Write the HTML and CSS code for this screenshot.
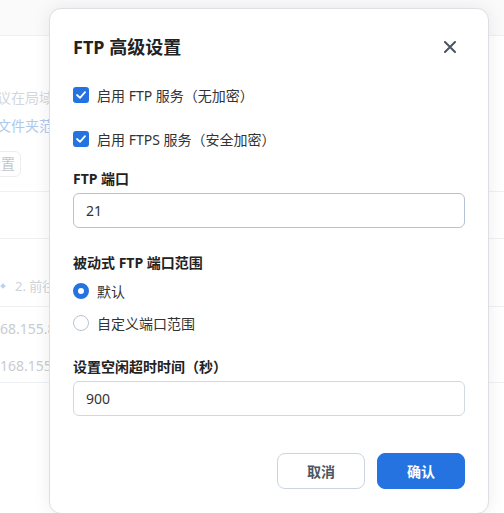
FILE: index.html
```html
<!DOCTYPE html>
<html lang="zh-CN">
<head>
  <meta charset="UTF-8">
  <meta name="viewport" content="width=device-width, initial-scale=1.0">
  <title>FTP 高级设置</title>
  <link rel="stylesheet" href="styles.css">
</head>
<body>
  <div class="page">
    <div class="page-header"></div>
    <div class="page-section intro">
      <p class="intro-text">议在局域网内共享文件</p>
      <p class="intro-link">文件夹范围</p>
      <span class="ghost-btn">设置</span>
    </div>
    <div class="page-section spacer"></div>
    <div class="page-section steps">
      <p class="step"><span class="step-dot"></span>2. 前往</p>
    </div>
    <div class="page-section hosts">
      <p class="host host-first">168.155.8</p>
      <p class="host">168.155.</p>
    </div>
  </div>

  <div class="modal">
    <div class="modal-head">
      <h2>FTP 高级设置</h2>
      <svg class="close" width="12" height="12" viewBox="0 0 12 12">
        <path d="M1 1 L11 11 M11 1 L1 11" stroke="#4b5563" stroke-width="2" stroke-linecap="round"/>
      </svg>
    </div>

    <label class="check first">
      <span class="box"><svg width="10" height="8" viewBox="0 0 10 8"><path d="M1 4 L4 6.8 L9 1.2" fill="none" stroke="#fff" stroke-width="1.8" stroke-linecap="round" stroke-linejoin="round"/></svg></span>
      <span>启用 FTP 服务（无加密）</span>
    </label>
    <label class="check">
      <span class="box"><svg width="10" height="8" viewBox="0 0 10 8"><path d="M1 4 L4 6.8 L9 1.2" fill="none" stroke="#fff" stroke-width="1.8" stroke-linecap="round" stroke-linejoin="round"/></svg></span>
      <span>启用 FTPS 服务（安全加密）</span>
    </label>

    <div class="field-label port-label">FTP 端口</div>
    <input class="field focus" type="text" value="21">

    <div class="field-label passive-label">被动式 FTP 端口范围</div>
    <label class="radio"><span class="dot on"></span>默认</label>
    <label class="radio second"><span class="dot"></span>自定义端口范围</label>

    <div class="field-label idle-label">设置空闲超时时间（秒）</div>
    <input class="field" type="text" value="900">

    <div class="actions">
      <button class="btn cancel">取消</button>
      <button class="btn confirm">确认</button>
    </div>
  </div>
</body>
</html>
```

FILE: styles.css
```css
html, body {
  margin: 0;
  height: 100%;
  overflow: hidden;
}
body {
  font-family: "Noto Sans", "Noto Sans CJK SC", sans-serif;
  font-size: 14px;
  background: #fff;
  color: #333;
}
p {
  margin: 0;
}

/* faded page behind the dialog */
.page-header {
  height: 35px;
  background: #fafafb;
  border-bottom: 1px solid #eef0f4;
}
.page-section {
  border-bottom: 1px solid #eef0f4;
}
.intro {
  height: 156px;
  padding-top: 52px;
  box-sizing: border-box;
}
.intro-text {
  margin-left: -3px;
  line-height: 20px;
  color: #d3d7dd;
}
.intro-link {
  margin-left: -3px;
  margin-top: 8px;
  line-height: 20px;
  color: #adc9ee;
}
.ghost-btn {
  display: inline-block;
  margin-left: -20px;
  margin-top: 15px;
  padding: 0 5px 0 6px;
  line-height: 24px;
  border: 1px solid #eceef1;
  border-radius: 6px;
  color: #c3c6cb;
}
.spacer {
  height: 46px;
}
.steps {
  height: 68px;
  padding-top: 37px;
  box-sizing: border-box;
}
.step {
  line-height: 20px;
  padding-left: 15px;
  position: relative;
  color: #cfd2d6;
  font-size: 13px;
}
.step-dot {
  position: absolute;
  left: 1px;
  top: 8px;
  width: 4px;
  height: 4px;
  background: #b9d3f3;
  transform: rotate(45deg);
}
.hosts {
  height: 76px;
  padding-top: 12px;
  box-sizing: border-box;
}
.host {
  line-height: 20px;
  color: #c9ccd0;
}
.host-first {
  margin-left: -8px;
  margin-bottom: 17px;
}

/* dialog */
.modal {
  position: absolute;
  left: 49px;
  top: 8px;
  width: 440px;
  height: 506px;
  box-sizing: border-box;
  padding: 26px 23px 0 23px;
  background: #fff;
  border: 1px solid #dcdfe4;
  border-radius: 12px;
  box-shadow: 0 0 18px rgba(0, 0, 0, 0.08);
}
.modal-head {
  display: flex;
  align-items: center;
  justify-content: space-between;
  height: 24px;
}
.modal-head h2 {
  margin: 0;
  font-size: 18px;
  font-weight: 700;
  color: #222;
  line-height: 24px;
}
.close {
  margin-right: 9px;
}
.check {
  display: flex;
  align-items: center;
  gap: 8px;
  height: 20px;
  margin-top: 24px;
  color: #333;
}
.check.first {
  margin-top: 26px;
}
.box {
  width: 16px;
  height: 16px;
  border-radius: 3px;
  background: #2473e0;
  display: flex;
  align-items: center;
  justify-content: center;
}
.field-label {
  line-height: 20px;
  font-weight: 700;
  color: #222;
  margin-bottom: 4px;
}
.port-label {
  margin-top: 20px;
}
.passive-label {
  margin-top: 25px;
  margin-bottom: 8px;
}
.idle-label {
  margin-top: 24px;
}
.field {
  display: block;
  width: 100%;
  height: 35px;
  box-sizing: border-box;
  padding: 0 12px;
  border: 1px solid #cfd8e3;
  border-radius: 6px;
  font-family: inherit;
  font-size: 14px;
  color: #333;
  outline: none;
}
.field.focus {
  border-color: #b4c2d4;
}
.radio {
  display: flex;
  align-items: center;
  gap: 8px;
  height: 20px;
  color: #333;
}
.radio.second {
  margin-top: 12px;
}
.dot {
  width: 16px;
  height: 16px;
  box-sizing: border-box;
  border-radius: 50%;
  border: 1px solid #b6c3d4;
}
.dot.on {
  border: 5px solid #2473e0;
}
.actions {
  display: flex;
  justify-content: flex-end;
  gap: 12px;
  margin-top: 37px;
}
.btn {
  width: 88px;
  height: 36px;
  border-radius: 8px;
  font-family: inherit;
  font-size: 14px;
  font-weight: 700;
  cursor: pointer;
}
.cancel {
  background: #fff;
  border: 1px solid #cbd5e1;
  color: #4b5563;
}
.confirm {
  background: #2473e0;
  border: 1px solid #2473e0;
  color: #fff;
}
```
